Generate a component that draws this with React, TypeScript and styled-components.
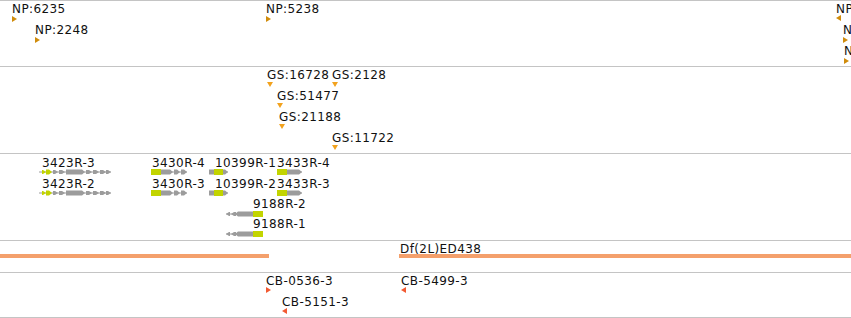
import * as React from 'react';
import styled, { createGlobalStyle } from 'styled-components';

const GlobalStyle = createGlobalStyle`
  html, body {
    margin: 0;
    padding: 0;
    background: #ffffff;
  }
`;

const DivPanel = styled.div`
  width: 851px;
  border-top: 1px solid #c4c4c4;
  font-family: "DejaVu Sans", "Liberation Sans", sans-serif;
  overflow: hidden;
`;

const DivTrack = styled.div<{ $height: number }>`
  position: relative;
  height: ${props => props.$height}px;
  border-bottom: 1px solid #c4c4c4;
  overflow: hidden;
`;

const DivFeature = styled.div<{ $x: number, $y: number, $gap: number }>`
  position: absolute;
  left: ${props => props.$x}px;
  top: ${props => props.$y}px;
  display: flex;
  flex-direction: column;
  align-items: flex-start;
  gap: ${props => props.$gap}px;
`;

const SpanLabel = styled.span<{ $dx?: number }>`
  margin-left: ${props => props.$dx ?? 0}px;
  font-size: 12px;
  line-height: 12px;
  letter-spacing: 0.4px;
  color: #111;
  white-space: nowrap;
`;

const DivBar = styled.div<{ $x: number, $y: number, $w: number }>`
  position: absolute;
  left: ${props => props.$x}px;
  top: ${props => props.$y}px;
  width: ${props => props.$w}px;
  height: 4px;
  background-color: #f4a06c;
`;

const SvgGlyph = styled.svg`
  display: block;
  overflow: visible;
`;

type Dir = 'right' | 'left' | 'down';

function Marker({ dir, color }: { dir: Dir, color: string }) {
  if (dir == 'down') {
    return <SvgGlyph width={6} height={5}><polygon points="0,0 6,0 3,5" fill={color} /></SvgGlyph>;
  }
  const pts = dir == 'right' ? '0,0 5,3 0,6' : '5,0 0,3 5,6';
  return <SvgGlyph width={5} height={6}><polygon points={pts} fill={color} /></SvgGlyph>;
}

// exon pieces of a transcript, x relative to glyph start
type Part = { x: number, w: number, c: 'cds' | 'utr', arrow?: boolean, h?: number };

const CDS = '#c2d400';
const UTR = '#9c9c9c';

function GeneGlyph({ width, parts, reverse }: { width: number, parts: Part[], reverse?: boolean }) {
  return (
    <SvgGlyph width={width} height={6}>
      <line x1={0} y1={3} x2={width} y2={3} stroke={UTR} strokeWidth={1} />
      {parts.map((p, i) => {
        const h = p.h ?? 6;
        const y0 = (6 - h) / 2;
        const y1 = y0 + h;
        const fill = p.c == 'cds' ? CDS : UTR;
        if (!p.arrow) {
          return <rect key={i} x={p.x} y={y0} width={p.w} height={h} fill={fill} />;
        }
        const head = Math.min(3, p.w);
        const pts = reverse
          ? `${p.x},3 ${p.x + head},${y0} ${p.x + p.w},${y0} ${p.x + p.w},${y1} ${p.x + head},${y1}`
          : `${p.x},${y0} ${p.x + p.w - head},${y0} ${p.x + p.w},3 ${p.x + p.w - head},${y1} ${p.x},${y1}`;
        return <polygon key={i} points={pts} fill={fill} />;
      })}
    </SvgGlyph>
  );
}

const gene3423: Part[] = [
  { x: 3, w: 4, c: 'cds', arrow: true, h: 4 },
  { x: 7, w: 6, c: 'cds', arrow: true, h: 5 },
  { x: 14, w: 5, c: 'utr', arrow: true, h: 4 },
  { x: 20, w: 6, c: 'utr', arrow: true, h: 4 },
  { x: 27, w: 13, c: 'utr', h: 5 },
  { x: 40, w: 6, c: 'utr', arrow: true, h: 5 },
  { x: 47, w: 6, c: 'utr', arrow: true, h: 4 },
  { x: 54, w: 6, c: 'utr', arrow: true, h: 4 },
  { x: 61, w: 6, c: 'utr', arrow: true, h: 4 },
  { x: 67, w: 5, c: 'utr', arrow: true, h: 4 },
];

const gene3430: Part[] = [
  { x: 0, w: 10, c: 'cds' },
  { x: 10, w: 12, c: 'utr', arrow: true, h: 5 },
  { x: 23, w: 6, c: 'utr', arrow: true, h: 5 },
  { x: 30, w: 6, c: 'utr', arrow: true, h: 5 },
];

const gene10399: Part[] = [
  { x: 0, w: 5, c: 'utr', h: 5 },
  { x: 5, w: 9, c: 'cds' },
  { x: 14, w: 5, c: 'utr', arrow: true, h: 5 },
];

const gene3433: Part[] = [
  { x: 0, w: 10, c: 'cds' },
  { x: 10, w: 15, c: 'utr', arrow: true, h: 5 },
];

const gene9188: Part[] = [
  { x: 0, w: 4, c: 'utr', arrow: true, h: 4 },
  { x: 5, w: 5, c: 'utr', arrow: true, h: 4 },
  { x: 9, w: 18, c: 'utr', arrow: true, h: 5 },
  { x: 27, w: 10, c: 'cds' },
];

type Feature = {
  label: string,
  x: number,      // left of the feature, page coords
  capTop: number, // top of the label's capitals, page coords
  gap: number,
  glyph: React.ReactNode,
  labelDx?: number,
};

const NP = '#d08c0c';
const GS = '#f2a21e';
const CB = '#f25a32';

const tracks: { top: number, height: number, features: Feature[], bars?: { x: number, w: number, y: number }[] }[] = [
  {
    top: 1, height: 65, features: [
      { label: 'NP:6235', x: 12, capTop: 4, gap: 1, glyph: <Marker dir="right" color={NP} /> },
      { label: 'NP:2248', x: 35, capTop: 25, gap: 1, glyph: <Marker dir="right" color={NP} /> },
      { label: 'NP:5238', x: 266, capTop: 4, gap: 1, glyph: <Marker dir="right" color={NP} /> },
      { label: 'NP:5306', x: 836, capTop: 4, gap: 0, glyph: <Marker dir="left" color={NP} /> },
      { label: 'NP:5307', x: 843, capTop: 25, gap: 1, glyph: <Marker dir="right" color={NP} /> },
      { label: 'NP:1119', x: 844, capTop: 46, gap: 1, glyph: <Marker dir="right" color={NP} /> },
    ],
  },
  {
    top: 67, height: 86, features: [
      { label: 'GS:16728', x: 267, capTop: 70, gap: 1, glyph: <Marker dir="down" color={GS} /> },
      { label: 'GS:2128', x: 332, capTop: 70, gap: 1, glyph: <Marker dir="down" color={GS} /> },
      { label: 'GS:51477', x: 277, capTop: 91, gap: 1, glyph: <Marker dir="down" color={GS} /> },
      { label: 'GS:21188', x: 279, capTop: 112, gap: 1, glyph: <Marker dir="down" color={GS} /> },
      { label: 'GS:11722', x: 332, capTop: 133, gap: 1, glyph: <Marker dir="down" color={GS} /> },
    ],
  },
  {
    top: 154, height: 86, features: [
      { label: '3423R-3', x: 39, labelDx: 3, capTop: 158, gap: 0, glyph: <GeneGlyph width={72} parts={gene3423} /> },
      { label: '3423R-2', x: 39, labelDx: 3, capTop: 179, gap: 0, glyph: <GeneGlyph width={72} parts={gene3423} /> },
      { label: '3430R-4', x: 151, labelDx: 1, capTop: 158, gap: 0, glyph: <GeneGlyph width={36} parts={gene3430} /> },
      { label: '3430R-3', x: 151, labelDx: 1, capTop: 179, gap: 0, glyph: <GeneGlyph width={36} parts={gene3430} /> },
      { label: '10399R-1', x: 209, labelDx: 6, capTop: 158, gap: 0, glyph: <GeneGlyph width={19} parts={gene10399} /> },
      { label: '10399R-2', x: 209, labelDx: 6, capTop: 179, gap: 0, glyph: <GeneGlyph width={19} parts={gene10399} /> },
      { label: '3433R-4', x: 277, capTop: 158, gap: 0, glyph: <GeneGlyph width={25} parts={gene3433} /> },
      { label: '3433R-3', x: 277, capTop: 179, gap: 0, glyph: <GeneGlyph width={25} parts={gene3433} /> },
      { label: '9188R-2', x: 226, labelDx: 27, capTop: 199, gap: 1, glyph: <GeneGlyph width={37} parts={gene9188} reverse /> },
      { label: '9188R-1', x: 226, labelDx: 27, capTop: 219, gap: 1, glyph: <GeneGlyph width={37} parts={gene9188} reverse /> },
    ],
  },
  {
    top: 241, height: 31, features: [
      { label: 'Df(2L)ED438', x: 400, capTop: 244, gap: 0, glyph: null },
    ],
    bars: [
      { x: 0, w: 269, y: 254 },
      { x: 399, w: 452, y: 254 },
    ],
  },
  {
    top: 273, height: 44, features: [
      { label: 'CB-0536-3', x: 266, capTop: 276, gap: 0, glyph: <Marker dir="right" color={CB} /> },
      { label: 'CB-5151-3', x: 282, capTop: 297, gap: 0, glyph: <Marker dir="left" color={CB} /> },
      { label: 'CB-5499-3', x: 401, capTop: 276, gap: 0, glyph: <Marker dir="left" color={CB} /> },
    ],
  },
];

export default function App() {
  return (
    <>
      <GlobalStyle />
      <DivPanel>
        {tracks.map((t, i) => (
          <DivTrack key={i} $height={t.height}>
            {t.bars?.map((b, j) => <DivBar key={j} $x={b.x} $y={b.y - t.top} $w={b.w} />)}
            {t.features.map(f => (
              <DivFeature key={f.label} $gap={f.gap} $x={f.x} $y={f.capTop - 1 - t.top}>
                <SpanLabel $dx={f.labelDx}>{f.label}</SpanLabel>
                {f.glyph}
              </DivFeature>
            ))}
          </DivTrack>
        ))}
      </DivPanel>
    </>
  );
}
